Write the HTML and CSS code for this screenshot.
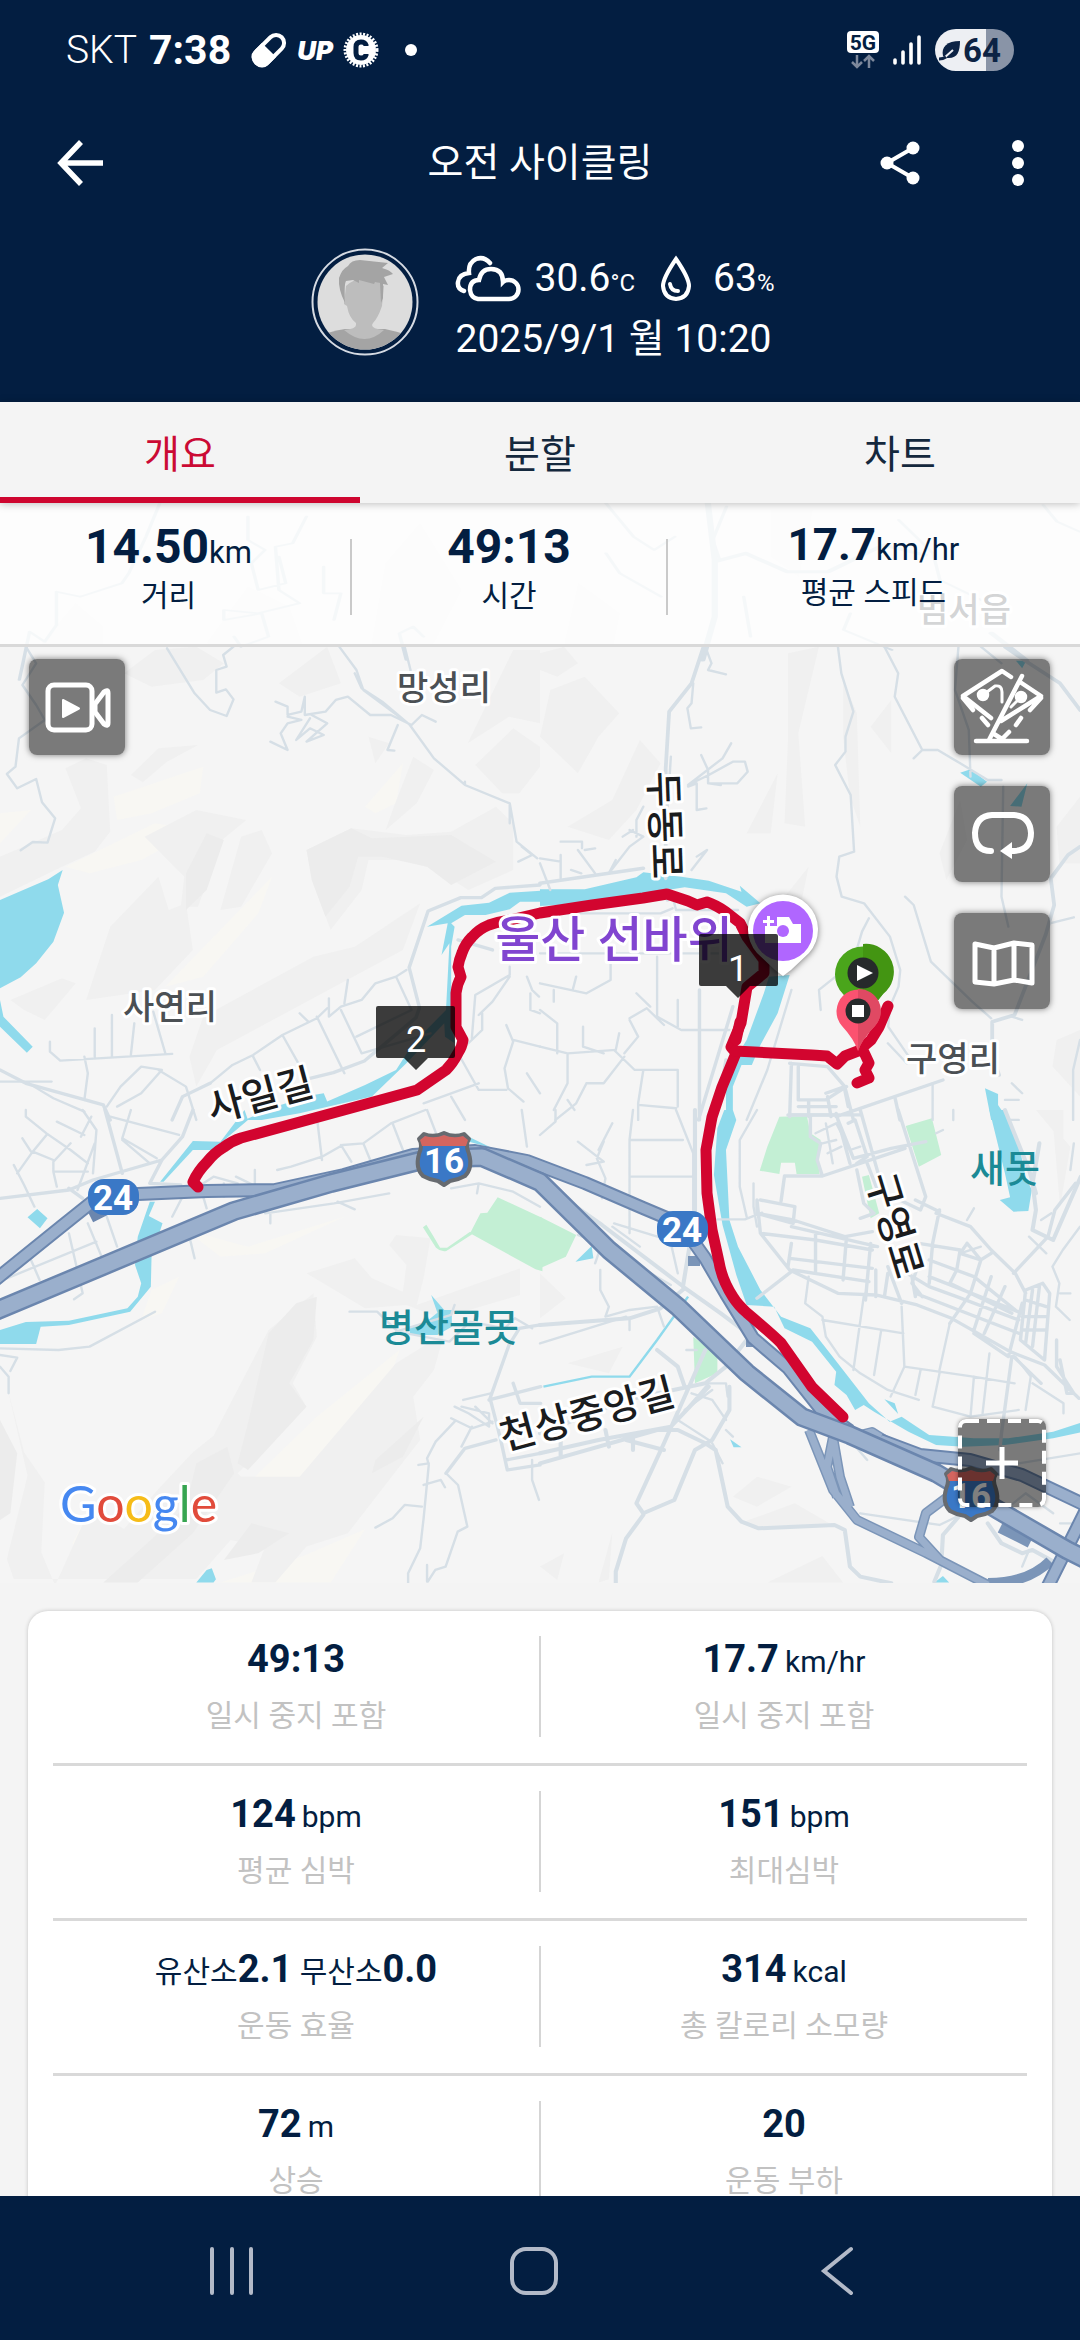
FILE: index.html
```html
<!DOCTYPE html>
<html lang="ko">
<head>
<meta charset="utf-8">
<meta name="viewport" content="width=device-width, initial-scale=1">
<title>오전 사이클링</title>
<link rel="stylesheet" href="styles.css">
</head>
<body>
<header class="header">
  <div class="status">
    <div class="status-left">
      <span class="carrier">SKT</span>
      <span class="clock">7:38</span>
      <svg class="status-icon pill" width="36" height="36" viewBox="0 0 36 36"><g transform="rotate(45 18 18)"><rect x="10" y="0" width="16" height="36" rx="8" fill="none" stroke="#fff" stroke-width="4"/><path d="M8 18h20v12a10 8 0 0 1-20 0z" fill="#fff"/></g></svg>
      <span class="up">UP</span>
      <svg class="status-icon" width="36" height="36" viewBox="0 0 36 36"><circle cx="18" cy="18" r="15" fill="#fff"/><circle cx="18" cy="18" r="16" fill="none" stroke="#fff" stroke-width="3" stroke-dasharray="2 1.5"/><path d="M23 14v-1q-1-3-5-3-5 0-5 5v6q0 5 5 5 4 0 5-3v-1" fill="none" stroke="#031e41" stroke-width="5"/></svg>
      <span class="more-dot"></span>
    </div>
    <div class="status-right">
      <svg width="32" height="38" viewBox="0 0 32 38"><rect width="32" height="22" rx="4" fill="#fff"/><text x="16" y="19" class="net">5G</text><path d="M10 24v12M5 31l5 5 5-5M22 37V25M17 30l5-5 5 5" fill="none" stroke="#7d889b" stroke-width="2.5"/></svg>
      <svg width="28" height="30" viewBox="0 0 28 30"><path d="M2 25v3M10 17v11M18 9v19M26 2v26" stroke="#fff" stroke-width="3.6" stroke-linecap="round"/></svg>
      <div class="battery"><svg width="22" height="22" viewBox="0 0 22 22"><path d="M4 17C2 8 8 2 21 2c0 11-3 18-13 17z" fill="#0c2344"/><path d="M0 20l5-1 9-8" fill="none" stroke="#edeff3" stroke-width="2"/><path d="M0 20q4 0 7-2" fill="none" stroke="#0c2344" stroke-width="3"/></svg><span>64</span></div>
    </div>
  </div>
  <div class="appbar">
    <button class="icon-btn back" aria-label="뒤로"><svg width="48" height="48" viewBox="0 0 48 48"><path d="M25 3L5 24l20 21M5 24h42" fill="none" stroke="#fff" stroke-width="5.5"/></svg></button>
    <h1>오전 사이클링</h1>
    <div class="actions">
      <button class="icon-btn" aria-label="공유"><svg width="48" height="48" viewBox="0 0 48 48"><path d="M37 9L11 24l26 15" fill="none" stroke="#fff" stroke-width="4"/><circle cx="37" cy="9" r="6.5" fill="#fff"/><circle cx="11" cy="24" r="6.5" fill="#fff"/><circle cx="37" cy="39" r="6.5" fill="#fff"/></svg></button>
      <button class="icon-btn" aria-label="더보기"><svg width="48" height="48" viewBox="0 0 48 48" fill="#fff"><circle cx="24" cy="7" r="6"/><circle cx="24" cy="24" r="6"/><circle cx="24" cy="41" r="6"/></svg></button>
    </div>
  </div>
  <div class="profile">
    <svg width="108" height="108" viewBox="0 0 108 108">
      <clipPath id="face"><circle cx="54" cy="54" r="47.500"/></clipPath>
      <circle cx="54" cy="54" r="52.500" fill="none" stroke="#d5dae2" stroke-width="2"/>
      <g clip-path="url(#face)"><path fill="#ddd" d="M0 0h108v108H0z"/>
      <path fill="#a4a4a4" d="M6 89q14-6 28-8h40q16 3 30 9v20H6z"/>
      <path fill="#bdbdbd" d="M35 38q18-16 38 0l-2 20q-4 12-9 17l-1 2q0 4 12 5-19 18-40 0 12-1 12-5v-2q-7-5-9-17l-3-2z"/>
      <path fill="#a4a4a4" d="M34 55q-7-14-6-25 3-9 9-12 3-6 12-6l28 3-6 5q8 2 11 6l-9 3 4 8-5-1 0 14-2 5-1-20-5-1-1 2-15-4v3l-6-3-7 1q-2 3-1 22z"/></g>
    </svg>
    <div class="profile-text">
      <div class="weather">
        <svg width="66" height="48" viewBox="0 0 66 48" fill="none" stroke="#fff" stroke-width="4.500" stroke-linecap="round"><path d="M23 44h31a9 9 0 0 0 0-19q-4 0-6 2 0-13-12-13-10 0-12 11-9 0-9 10 1 8 8 9zM35 8Q29 1 21 4q-8 4-7 14-10 1-11 9-1 7 6 9"/></svg>
        <span class="temp">30.6<small>°C</small></span>
        <svg class="drop" width="32" height="48" viewBox="0 0 32 48" fill="none" stroke="#fff" stroke-width="4"><path d="M16 4Q3 23 3 31q1 12 13 13 12-1 13-13Q29 23 16 4z"/><path d="M10 29q1 7 8 7" stroke-linecap="round"/></svg>
        <span>63<small>%</small></span>
      </div>
      <div class="date">2025/9/1 월 10:20</div>
    </div>
  </div>
</header>

<nav class="tabs" role="tablist">
  <button class="tab active" role="tab" aria-selected="true">개요</button>
  <button class="tab" role="tab" aria-selected="false">분할</button>
  <button class="tab" role="tab" aria-selected="false">차트</button>
</nav>

<main class="content">
  <section class="map">
    <svg class="map-canvas" viewBox="0 503 1080 1080" preserveAspectRatio="xMidYMid slice">
      <defs>
        <g id="shield"><path d="M-25-21l5-5q10 4 20-1 10 5 20 1l5 5q-4 6 0 15 4 14-4 22-7 4-15 5l-6 4-6-4q-8-1-15-5-8-8-4-22 4-9 0-15z" fill="#3a78c6" stroke="#676b70" stroke-width="4" stroke-linejoin="round"/><path d="M-24-20l5-4q10 3 19-1 9 4 19 1l5 4-2 6h-44z" fill="#d4655f"/></g>
      </defs>
      <rect y="503" width="1080" height="1080" fill="#f5f5f5"/>

      <!-- hill shading -->
      <g transform="translate(0 390) scale(.6886 .3333)" fill="#f0f0f0">
        <path d="M560 520l50-120 60 200-40 160h-90zM300 760l60-170 60 60 20 120zM60 760l50-120 40 70v60zM1120 360l60 0-20 200-40-60zM820 760l20-180 60 90-10 100z"/>
      </g>
      <g transform="translate(0 640) scale(.3444 .3333)">
        <g fill="#f8f7f3"><path d="M330 470l260-90-10 80-140 60-100 20zM190 680l260-130 120 20-160 90-150 40zM480 1040l310-330-40 110-160 190zM1060 500l110-130-20 120-60 30zM0 520l90-10-90 100z"/></g>
        <g fill="#f0f0f0"><path d="M190 385l60-30 60 20 10 200-45 60-95 45-180 90v-120l180-80 55-65zM380 405l80-80 115-10-90 50-70 62zM360 100l90-70 120-10 80 50-60 50-150 20zM810 130l140-110 40 110-120 40zM1490 30h78v220l-90-20-120 80zM1380 375l110-110 78 55v60l-60 80-50 0z"/><path d="M890 630l130-65 160 20 130-10 130-75 50 50v140l-130 60-90-60-100-30h-100l-20 90-90 120-50-140zM420 590l150-80 145 30-70 60-70 200-50 0 10-90zM1070 290l60 20-40 60zM1200 350l60 40-50 100-90 80 20-60zM320 860l140-150 30 100 50-20 20 140-110 120-200 30zM700 590l60-20 30 70-90 160-60 10zM30 1080l150-65 40 15-90 110-60-30zM590 1130l320-180 120-30 190-130-50 140-180 100-360 200-60 110-20-90z"/><path fill="#ececec" d="M890 630l130-65 60 30 230-10 130 80-130 70-70-55-130-30h-70l-25 90-70 90-40-110zM540 700l60-120 50 20-50 150-60 60z"/></g>
      </g>
      <g transform="translate(540 640) scale(.3444 .3333)">
        <g fill="#f0f0f0"><path d="M0 40l70-20 40 50-60 40-50-20zM30 150l100-40 100 110-60 70-60 110-110-110zM80 560l130-80 80-180 60 70-70 140-80 90zM720 40l90-20-60 260 20 280-60-10 10-250zM960 260l60-80 0 160zM600 580l90-180-20 180zM640 860l140-180-20 100-80 90zM880 120l40 100 10 340-30-90-20-180zM1160 640l60-160 20 120-60 120zM1500 560l68-90v200l-60 0zM1500 1200l68-30v200l-80-90z"/></g>
      </g>
      <g transform="translate(0 1110) scale(.3444 .3333)">
        <g fill="#f8f7f3"><path d="M740 1100l180-180 240-200-40 120-230 270zM640 1418l240-80 180-80-100 160zM540 360l180 50 280-90-230 110-130 10zM210 1300l50-100-20 140zM440 540l80-40-50 110-60 20z"/></g>
        <g fill="#f0f0f0"><path d="M890 490l140-45 50 60 90 40 10-80-50-60 20-30 100 10-20 120-20 80 300-110v80l-230 70-100-40-120 10zM780 660l130-110 10 130-70 140 40 70-200 200 10 10 170 0 280-340 140-90-30 110-60 80 20 130-210 280-120 40-90 107h-70l40-107-100-20-100 117H40l-20-60 60-250-60-270 50 200 60 90-10 210 40 100 100-230 100 60 100-120 100-110 60-50z"/><path fill="#ececec" d="M780 670l80-90 60-20-10 130-70 130 50 70-170 190-30-20 30-120zM570 1060l90-50 20 80-120 180-160 148H300l140-130 100-100zM0 930l50 100-20 180-30 20zM650 1350l80-110 110 30-90 60zM1090 1050l140-130-60 120-90 50z"/></g>
      </g>
      <g transform="translate(540 1110) scale(.3444 .3333)" fill="#f0f0f0">
        <path d="M0 490l75 75-75 60zM80 760l160-50-40 80zM580 1240l160-60 100 60-200 20zM560 1160l70-60 100 30-100 60zM0 1370l70-40-20 80zM170 1418l40-150-10 140zM660 1418l160-80 60 80zM1490 50l50 60-30 180zM1440 0h80v100z"/>
      </g>

      <!-- parks -->
      <g fill="#c3efd4">
        <path transform="translate(0 1110) scale(.3444 .3333)" d="M1365 370l30-60 20-2 30-46 130 62v160l-20-6zM1228 352l10-8 20 34 20 35 20 0 67-48 6 8-75 50q-15 4-30-10z"/>
        <path transform="translate(540 1110) scale(.3444 .3333)" d="M0 320l105 55-30 65-75 35zM695 20l80-2 10 52 30 20-10 50 7 52h-67l-5-34h-40l-5 34-57-10 22-72zM1062 48l76-23 27 110-65 35zM445 680l70 55v55l-65 30zM935 200l20-5 30 115-25 15z"/>
      </g>

      <!-- water -->
      <g fill="#8fdaec">
        <path transform="translate(0 640) scale(.3444 .3333)" d="M1570 752l-90 6-60 30-80 9-100 63 60-10-18 95 23-35-10 200-95 100-50 80-90 45-110 50-10-25-30 5-110 35-90 40h50l110-20 210-50 100-100 110-120 2 40 28 20-10-80V920l10-60-10-10 40-25h60l70-17 30-23 60 0zM0 780l140-62 42-28-14 45 18 83-31 87-50 65-45 42-60 33zM0 1080l10 50 85 90-17 18-78-78z"/>
        <path transform="translate(540 640) scale(.3444 .3333)" d="M0 748h130l150-36 20-15 110 13 80 12 95 33-5-18 60 53-40 10-60-40-120-18-50 8-220 40-150 8zM725 1005l-35 115-50 95-25 60h-30l-25 65v100h-20v-110l25-70 35-60 50-140 15-50zM1220 398l30-10 48 37-18 15zM1415 430l-17 70-33-2zM1292 1345l38 17v33l30 45h-50zM1382 62h30l-12 23z"/>
        <path transform="translate(0 1110) scale(.3444 .3333)" d="M710 0l10 30-80 70-20 20h-60l-85 95h-10l95-122 80 2zM435 275h15l-18 43 40 22-32 100-2 90-60 75-178 40-82 5-13 52H0v-42l75-24 125-4 170-37 30-35 10-40-18-55 8-85zM80 322l28-25 30 28-22 30zM570 1418l30-38 15-5 12 33-7 10zM1252 555l38 45h22v50l-42 25h-80v-22l50-20 30-25zM1310 80l30-10 90 45z"/>
        <path transform="translate(540 1110) scale(.3444 .3333)" d="M535 0h25l10 30-30 90 10 210 25 80 65 130 60 80 85 35 65 85 105 140 60 55 35-15 80 55 130 10 100 0 130-20 90-30v30l-90 20-140 20-120 5-80-5-80-40-100-60-30-20-25 15-25-45-35-30 5-40-70-90-80-40-30-65-80-5-30-90-40-150-25-150 10-140zM1305 0h45l40 100 20 100 18 40-10 63-43 2-40-35 30-8-15-72zM103 455l47-47 5 37zM1000 868l30 12 10 32zM552 988l33 24h-23zM1145 1418l25-20 18 20z"/>
        <path transform="translate(540 1110) scale(.3444 .3333)" d="M10 830l140-30 110 0 80-110 90-130" fill="none" stroke="#8fdaec" stroke-width="7"/>
      </g>

      <!-- local roads -->
      <g fill="none" stroke="#d6dfe6" stroke-width="7" stroke-linejoin="round" stroke-linecap="round">
        <g transform="translate(0 390) scale(.6886 .3333)" stroke-width="5">
          <path d="M232 340l-20 100-25 110-10 30-60 40-35-15v100l-17 50-22-30-15 145M360 380v70l25 30-20 40 10 80 40-20-10-80M445 380l-20 80-25 10 5 130 30 40-60 30-50-10M470 530v80l25 0-10 80M325 660l0 30 55-20 10 70-40 30-10-30M590 810l-10-80 20-20 15 30M880 340l40 100 30 40 30-40M880 490l20 60 60 70M1055 350l-20 100 10 60 40-20M1305 390l50 100 10 80 70 70M1235 670l-10 50 70 60M1080 620l10 120M1515 345l20 50 33 30"/>
          <path stroke-width="9" d="M1028 340l10 170 0 170-18 130M1038 515l45-25 60 55h60l80-80 60 30M1440 730l50 80"/>
        </g>
        <g transform="translate(0 640) scale(.3444 .3333)">
          <path d="M75 20l30 50-40 65 40 60 25 45-75 55-10 85-25 22 30 43 55-28 17 70 38 48-22 73-43-2-35 25M485 25l80 135 45 50 48 18 20-50-22-30-28 10V90l30-10-10-35 30-25M985 20l50 70 20 60 130 100M1175 20l17 70-10 100M1030 100l20 45 60 40 80 70M800 185l35 15v25l40-10 10-45v55l60-10 30-35 35-10 65 55 60 0 60 30 30-30 40 20M835 230l40 10-40 10-20 30 20 50-50-25M900 235l-40 65 40-35 40 20-50 20 60-55-45-25M1155 255l-30 75 20 2M1190 255l70 100 90 80 130 55 20 115 60 50M1350 425v10M1480 495v55M1505 665l40-20-30-25M0 1325h150M145 1205v30l30 27 325-20M75 1325l80 50 90 40M325 1125v125M275 1165v85M390 1150l-10 95M445 1115l35 125M245 1250l10 50-10 80M340 1400l70-40 60-70-60-10-60 60-40 60M460 1290l80 50 30 100M610 1330l65-55 60-30 85-60 100-50 30-30M735 1250l20 40M820 1185l60 110M870 1120l25 25M920 1130l80 170M955 1075l0 55 35-30 60-20 40-50 60-20 30-20M1010 1020l-10 70M990 1110l60 130 200-60M1035 1190l160-80-45-100M1480 980v25l-100 60-10 130M1480 1010l-50 75-40 40M1530 1010l15 40 20 20M1540 1060v50l28 10M1400 1120v50l-40 40M1470 1155l20 50-25 80 10 60 45 40M1490 1200l78 20M1330 1240l60 110 80 0M1230 1390l160-60M1310 1370l40 70M1530 1300l38 60"/>
          <path stroke-width="10" d="M1568 735l-130 10-40 28h-60l-95 40-55 170 30 120-10 30-150 130-90 35-80 20M0 1290l75 40 225 65 20 45M500 1440l30-70 80-40"/>
          <path stroke-width="10" d="M1330 900l100 30"/>
        </g>
        <g transform="translate(540 640) scale(.3444 .3333)">
          <path d="M480 20l18 50-10 20 52 13M445 130l-5 60-12 15 10 60 30-3M865 20l10 80 35 115-23 75v45l-30 40 45 90 10 170-43 15-8 60 15 60 65 20 75 100 30 100-5 50-25 60-5 60 60 90M955 835l-20 40-20 70M1000 20l40 80-10 70 80 160-25 25M1110 330l45 0 65 40 80 50 40 0M1215 20l-10 130 40 120 5 140M1280 20l60 50M1345 440l-5 330 20 90M1060 770l25 25 50 170 120 120 55 50M1480 850l70-18M555 310l-25 45-100 80 60-30 70-40 35 0 8 30-30 35-85 0 0-40-20-45M430 440l25-10 0 80 28-5M490 430l35 5M380 350l-10 160M60 605h62v20M110 630l50 70M160 625l-30 5M0 670l30 80M0 655l60 10v50M60 645v60M90 690l30 10M200 700l60-80 40-30-40-20M220 660l-20 40M300 500l-20 40 0 50M240 590l30-20M440 690l45-60-30 20M0 820h350l35-15M385 770l10 40h180M0 940h520M340 950v180l70 40h140M205 960v60l-70 40-135-30M105 1010l-10 40M40 1050v35M280 1060l40 40M400 1080v80M0 1110l50 40v90M125 1160v60l60 20M215 1230l60 60 30-0h95v110M260 1140l25 50-40 50M260 1135l50-30 50 50M0 1220l80 20 140-10 10-50M80 1240v90l-40 80M300 1290l-15 100 0 50M285 1395l110 10M135 1330l50 0 60-80M135 1330l-30 60-60 50M80 1380l20 30M730 1050l-70 240-60 150M815 1110l-5-60 60-50M1010 1210l55 60M1140 1330v110M1370 1330l30 30M1350 1380h40M1360 1440h30M1370 1130l30 10M1568 1200l-20 90v150"/>
          <path stroke-width="11" d="M475 20l-35 110-65 85-10 170 0 330M370 750v30M1350 20l70 50 90 60 58 80M1568 620l-35 25-50 70 10 80-25 90-90 240-65 20 0 100 20 60M0 730l300-45"/>
          <path stroke-width="10" d="M725 1270l110 10 50 60 25 100M730 1270l-5 160M750 1280v100h80l60-40M750 1400h110M730 1425h200M835 1370l10 60M780 1380v50M830 1360l55-20M860 1430l310-110M885 1350l10 50M1030 1370l15 70M560 1100l-100 340M540 1260l-30 180M463 1050v390"/>
        </g>
        <g transform="translate(0 1110) scale(.3444 .3333)">
          <path d="M75 0v20l60 50 70 50 50 40M135 75l-40 50 60 25M95 125l-45 65M165 35l80 40M205 100l-50 55 0 30h100M240 0l40 60-10 130M265 20l-30 60M320 20l200 55M380 0l-25 85 100 60M355 90l80 70M275 100l-50 140M40 165l30 60 30 65M65 85l25 40M155 185l10 45M20 505l260-110M90 450l25 60M200 370l40 180-25 18M255 340l40 100M310 320l30 90M550 380l15 65M0 715l170 5 90-10 190-105M0 735l50 8-20 40M500 320l30-60 90-60 70 20M590 260l10 35M650 220l0 40M685 200l100 50M740 180v60M770 310l200-30 160-30M785 310v30M980 275l50 23M805 180l40-10 90-30 60-35 60-5 80-60 100-40M920 20l15 130M990 105l30 50M1055 100l20 50M1140 40l30 80M1240 0l30 80M1515 0l15 110M0 770l25 30 0 50M1310 235l80-15 100 25 78 45M1390 220l-5 30M1015 605h80l60 60 150 30 60-60 100 20 30-30 50 30M1150 665l160-50 10-30M1320 890l40 20 60 40 0-40-80-20M1310 925l60 30 60-20M1345 870l80-20M1380 890l50 50M1370 950l-30 60M1320 935l-55 60-25 50 5 20-15 160-10 90-35 75v70M1215 1065l30-5M1230 1125l50-15 12 22M1225 1190l-50-5-35 40-50 28M1295 1090l35 35 27 125-28 15-35 105-30 10-22 35M1240 1365l0 50M1545 1050v60l20 60"/>
          <path stroke-width="10" d="M305 0l50 190M560 0l-30 80-60 70-200 60-70 30-200 25M470 150l-35 70 90 5M200 235l40 30M1568 645l-60 10-30 50-55 160 30 120 20 95 95-15M1420 870l150-40M1490 820l20 60 60 0M1440 990l-90 25-55 75M1470 1050l98-20"/>
        </g>
        <g transform="translate(540 1110) scale(.3444 .3333)">
          <path d="M270 0l-10 90v280M260 90h155M265 200h180M395 0l50 130v170M110 95l75 60-50 10M185 95l-20 50 25 60-10 60M210 350l80 60M215 340l190 60M0 75l45-40V0M110 375l70 30 200 120M180 400l-20 60M175 480l0 60 25 50-10 30 70-20 80-10M260 630v30M0 700l250-80M340 590l20 60M630 0l-50 90v140l20 90M515 328h80l50-20M830 40l20 120M800 70l60-30M820 100l40-10M835 130l40-20M860 40l40 80 30-10M780 500l-10 80 50 40 10 60 40 60 60 50 80 50 90 30M820 630l235 40M940 560l-30 220M990 665l-20 130M1050 590l8 180-40 90M1058 770l200 30 120 20M1105 780l-15 75M1160 790l-20 100M1190 640l-30 140M1260 800l-10 120M1305 730l-20 180M1140 890l110 30 140-20M1380 740l45 60-15 100M1430 820l90 60 0 30M1420 380l50 50M1455 330l30-20M1240 330l20-35M1220 430l60-20M1550 100l-10 80M1568 350l-50 70-30 50 20 50-10 70 40 40M1510 550l30 0M480 820l60 0 5 40M440 850l60 20 40 60M420 900l80-60M400 930l30 20 60 40M490 820l-100 120M540 960l20 20M500 1000l30 60M900 990l50 60M930 1210l230 35 60-30M1390 1060l180-30M1150 70l20-10M1200 0v30M1350 1200l60-50 80 60M1510 1240l58 0M1400 1370l20-50M620 220v70l10 60M425 720l30 0M380 400l20 90M170 120l40-80"/>
          <path stroke-width="10" d="M720 15h140l50 130 110-30 100-20M785 20l0 60 30 20-10 50 15 48 240-83M860 10l40 150M895 40l20-10 35 110-30 20M930 0l60 220M1040 0l80 260-15 40-60-30M820 198h-110l-10 75M640 270l100 20-5 50-105-30 0-40 10 100 85 110 140 70 110 5 120 30 100 40 170 100 100 40 100 100M630 310l105 20 150 50 80-15M640 370l160 20 165 30M730 400l-10 70M725 445l240 30M800 370v120M735 480l220 35M890 380l-10 130M960 400l-15 170M730 485l-100 80M730 350l250 60M975 480v80M1010 490l-10 70M1010 470l40 110M1050 480l80 50 80 30 180 70M1100 460l-20 60 30 40M1100 400l120 20-10 60-20 40 180 90M1160 300l-20 100-10 120M1150 310l100 40 60 70 70 70 30 60M1240 400l40 50-30 100-60 90M1240 400l-20 30 60 20 30-20M1310 500l-50 160M1350 530l-60 140M1400 580l-40 160-100-70M1090 270l70 35M1090 550l300 120M1130 500l270 110M1130 450l130 50 120 100M1410 540l50-20 20 30-15 200-70-60zM1430 540l-20 160M1450 530l-20 180M1375 490l100-110 20-80 60-80M1370 740l-30 230-5 50M1500 690v80l50 80-20 0-20-100M1375 740l80 80M920 180l20 100 30 30-40 15M950 160l30 80M1080 500l10 60M1410 570l60 20M1400 620h70M1400 660h65"/>
          <path stroke-width="12" d="M450 0v310l-35 220 110 80 90 70M0 215l180 130 230 180M0 645l260-20 90-30 70-60M600 690l-60 80-60 50-230 50-250 100M340 720l60 50 20 60M490 830l-110 120-210 40-170 40M0 1060l340-100 60 0 80 40 30 20 35 170 40 45 50 20 220-10 30 15 15 110 30 30 90 20M550 830v70l-50 90-50 30-60 150-90 40-20-30 80-180 120-280M250 990l110 30M190 960l10 50M270 980v40M60 980v60M300 1215l-50 70-30 100 0 35M1220 1215l-50 60-5 90-20 50M1300 1240l40 60 60 30 30-10 70 40M1450 100l-20 120 10 80-10 60 60 30 80-190M1350 0l70 180 20 70"/>
        </g>
      </g>

      <!-- highways -->
      <g fill="none" stroke-linejoin="round">
        <path stroke="#7b95b8" stroke-width="10" d="M809 1430l24 60 24 30 69 33 62 32M833 1437l7 40 10 30M833 1437l-6 30 10 30M946 1498l-20 15-7 24 21 23M852 1437l20-5 16 10 12 16M988 1583q40 0 62-22M1000 1528l30 15M688 1261h12M746 1342h12"/>
        <path stroke="#9aafcc" stroke-width="7" d="M809 1430l24 60 24 30 69 33 62 32M833 1437l7 40 10 30M833 1437l-6 30 10 30M946 1498l-20 15-7 24 21 23M852 1437l20-5 16 10 12 16"/>
        <path stroke="#6b86ae" stroke-width="14" d="M-5 1280l67-54 35-28 41-4 69-3 68-1 69-15 69-20 62-4 52 10 58 22 58 25 38 16 24 34 21 36 27 44 35 30 34 43 28 20M880 1440l40 15 50 5 52 15 63 30M90 1216l20-10M1046 1590l40-80"/>
        <path stroke="#9aafcc" stroke-width="10" d="M-5 1280l67-54 35-28 41-4 69-3 68-1 69-15 69-20 62-4 52 10 58 22 58 25 38 16 24 34 21 36 27 44 35 30 34 43 28 20M880 1440l40 15 50 5 52 15 63 30M1046 1590l40-80"/>
        <path stroke="#6b86ae" stroke-width="20" d="M-7 1312l110-46 131-55 97-28 96-24 55-2 58 25 69 68 69 57 69 66 55 44 48 18 86 38 62 37 69 40 40 20"/>
        <path stroke="#9aafcc" stroke-width="15" d="M-7 1312l110-46 131-55 97-28 96-24 55-2 58 25 69 68 69 57 69 66 55 44 48 18 86 38 62 37 69 40 40 20"/>
      </g>

      <!-- ride -->
      <g fill="none" stroke="#d2052f" stroke-width="11" stroke-linecap="round" stroke-linejoin="round">
        <path d="M843 1417L812 1387 781 1343Q772 1334 747 1313 738 1305 733 1297 722 1280 719 1262L712 1230 707 1193 706 1150 712 1117 722 1087 736 1053 731 1047 741 1023 747 987 764 973v-13l-17-23-7-14-14-11q-10-7-19-10l-10 3-9-4-21-7-24 4-51 7-52 8-30 7q-12 2-21 5-10 4-17 12-7 7-10 16-3 7-4 14l3 10q-4 7-5 16v34l7 13q-1 7-5 13-5 10-12 17l-29 20-73 20-103 28q-9 3-17 9-10 6-17 15-9 9-14 20l5 5"/>
        <path d="M888 1006l-9 21-8 13-13 11-13 5-8 8-10-8-15-1-77-4M862 1048l7 15-4 7 4 8-12 5M736 1040l4-18"/>
      </g>

      <!-- place names -->
      <g class="place"><text x="444" y="700">망성리</text><text x="170" y="1019">사연리</text><text x="953" y="1071">구영리</text><text x="964" y="622">범서읍</text></g>
      <g class="street">
        <text transform="translate(665 825) rotate(88)" y="14">두동로</text>
        <text transform="translate(260 1095) rotate(-15)" y="14">사일길</text>
        <text transform="translate(895 1225) rotate(73)" y="14">구영로</text>
        <text transform="translate(587 1414) rotate(-15)" y="14">천상중앙길</text>
      </g>
      <g class="pond"><text x="449" y="1341">병산골못</text><text x="1005" y="1182">새못</text></g>
      <text class="sight" x="614" y="957">울산 선바위</text>

      <g fill="#3a78c6"><rect x="88" y="1179" width="51" height="36" rx="16"/><rect x="657" y="1211" width="51" height="36" rx="16"/></g>
      <use href="#shield" x="444" y="1160"/><use href="#shield" x="971" y="1495"/>
      <g class="route"><text x="113" y="1210">24</text><text x="682" y="1242">24</text><text x="444" y="1173">16</text><text x="971" y="1508">16</text></g>

      <!-- pins -->
      <g class="pin">
        <path d="M783 976l-8-6-18-17a35 35 0 1 1 52 0l-18 17z" fill="#fff"/>
        <circle cx="783" cy="931" r="30" fill="#b066ff"/>
        <path d="M765 926h12v-9h12l4 7h8v19h-36zM767 916h3v4h4v3h-4v4h-3v-4h-4v-3h4z" fill="#fff"/><circle cx="783" cy="931" r="6" fill="#b066ff"/>
      </g>
      <g fill="#000" fill-opacity=".76"><path d="M701 934h75a2 2 0 0 1 2 2v48a2 2 0 0 1-2 2h-26l-12 12-12-12h-25a2 2 0 0 1-2-2v-48a2 2 0 0 1 2-2zM378 1006h75a2 2 0 0 1 2 2v48a2 2 0 0 1-2 2h-25l-12 12-12-12h-26a2 2 0 0 1-2-2v-48a2 2 0 0 1 2-2z"/></g>
      <g class="lap"><text x="738" y="981">1</text><text x="416" y="1052">2</text></g>
      <path d="M863 1022q-8-14-20-28a28 28 0 1 1 40 0q-12 14-20 28z" fill="#4aa51b"/><path d="M863 944a28 28 0 0 1 20 50q-12 14-20 28z" fill="#439512"/>
      <circle cx="863" cy="973" r="15.500" fill="#262a2b"/><path d="M857 965l16 8-16 8z" fill="#fff"/>
      <path d="M858 1051q-4-12-16-25a22 22 0 1 1 33 0q-13 13-17 25z" fill="#fb5270"/><path d="M858 989a22 22 0 0 1 17 37q-13 13-17 25z" fill="#e04963"/>
      <circle cx="858" cy="1011" r="12.500" fill="#262a2b"/><path d="M852 1005h12v12h-12z" fill="#fff"/>

      <text class="google" x="60" y="1522"><tspan fill="#4688f1">G</tspan><tspan fill="#e14b3b">o</tspan><tspan fill="#f6bc18">o</tspan><tspan fill="#4688f1">g</tspan><tspan fill="#37a551">l</tspan><tspan fill="#e14b3b">e</tspan></text>
    </svg>

    <div class="summary">
      <div class="sum-cell first"><p class="sum-value"><b>14.50</b>km</p><p class="sum-label">거리</p></div>
      <div class="sum-cell"><p class="sum-value"><b>49:13</b></p><p class="sum-label">시간</p></div>
      <div class="sum-cell small"><p class="sum-value"><b>17.7</b>km/hr</p><p class="sum-label">평균 스피드</p></div>
    </div>

    <button class="map-btn video" aria-label="동영상"><svg width="96" height="96" viewBox="0 0 96 96" fill="none" stroke="#fff" stroke-width="5" stroke-linejoin="round"><rect x="19" y="26" width="44" height="45" rx="6"/><path d="M66 45l9-12q4-3 4 1v30q0 4-4 1l-9-12z"/><path d="M34 41v17l16-8.500z" fill="#fff" stroke-width="2"/></svg></button>
    <div class="map-tools">
      <button class="map-btn" aria-label="3D 지도 끄기"><svg width="96" height="96" viewBox="0 0 96 96" fill="none" stroke="#fff" stroke-width="4.500" stroke-linecap="round" stroke-linejoin="round"><path d="M57 18l-9-6L9 37l28 22M66 23l21 14-40 25M9 39l10 12M87 39l-11 12M22 82h51M68 17L35 81M28 59l6 7M67 59l-5 7M40 75l8 5 7-7"/><circle cx="29" cy="36" r="4" fill="#fff"/><circle cx="67" cy="38" r="4" fill="#fff"/><path d="M29 36l12-9q7-1 7 6v10M67 38l-10 10" stroke-width="3"/></svg></button>
      <button class="map-btn" aria-label="다시 보기"><svg width="96" height="96" viewBox="0 0 96 96"><path d="M37 65q-16 0-16-18 1-17 17-18h22q16 1 17 18 0 17-17 18h-6" fill="none" stroke="#fff" stroke-width="6" stroke-linecap="round"/><path d="M46 65l12-9v17z" fill="#fff"/></svg></button>
      <button class="map-btn" aria-label="지도 유형"><svg width="96" height="96" viewBox="0 0 96 96" fill="none" stroke="#fff" stroke-width="5" stroke-linejoin="round"><path d="M21 31l19 4 20-5 18 2v38l-18-3-20 4-19-2zM40 35v35M60 30v37"/></svg></button>
    </div>
    <button class="map-add" aria-label="추가"><svg width="88" height="88" viewBox="0 0 88 88" fill="none" stroke="#fff"><rect x="2" y="2" width="84" height="84" rx="6" stroke-width="4" stroke-dasharray="13 8"/><path d="M28 44h32M44 28v32" stroke-width="5"/></svg></button>
  </section>

  <section class="card">
    <div class="row"><div class="cell"><p class="value"><b>49:13</b></p><p class="label">일시 중지 포함</p></div><div class="cell"><p class="value"><b>17.7</b><span class="unit">km/hr</span></p><p class="label">일시 중지 포함</p></div></div>
    <div class="row"><div class="cell"><p class="value"><b>124</b><span class="unit">bpm</span></p><p class="label">평균 심박</p></div><div class="cell"><p class="value"><b>151</b><span class="unit">bpm</span></p><p class="label">최대심박</p></div></div>
    <div class="row"><div class="cell"><p class="value">유산소<b>2.1</b> 무산소<b>0.0</b></p><p class="label">운동 효율</p></div><div class="cell"><p class="value"><b>314</b><span class="unit">kcal</span></p><p class="label">총 칼로리 소모량</p></div></div>
    <div class="row"><div class="cell"><p class="value"><b>72</b><span class="unit">m</span></p><p class="label">상승</p></div><div class="cell"><p class="value"><b>20</b></p><p class="label">운동 부하</p></div></div>
  </section>
</main>

<footer class="navbar">
  <button class="nav-btn" aria-label="최근 앱"><svg width="54" height="54" viewBox="0 0 54 54"><path d="M7 5v44M27 5v44M46 5v44" stroke="#b3bac8" stroke-width="4" stroke-linecap="round"/></svg></button>
  <button class="nav-btn" aria-label="홈"><svg width="54" height="54" viewBox="0 0 54 54"><rect x="5" y="5" width="44" height="44" rx="14" fill="none" stroke="#b3bac8" stroke-width="4"/></svg></button>
  <button class="nav-btn" aria-label="뒤로 가기"><svg width="54" height="54" viewBox="0 0 54 54"><path d="M41 5L14 27l27 22" fill="none" stroke="#b3bac8" stroke-width="4" stroke-linecap="round"/></svg></button>
</footer>
</body>
</html>
```

FILE: styles.css
```css
* { box-sizing: border-box; }

body {
  margin: 0;
  height: 100vh;
  display: flex;
  flex-direction: column;
  background: #f4f4f4;
  color: #031e41;
  font-family: Roboto, "Noto Sans CJK KR", sans-serif;
}

p, h1 { margin: 0; }
svg { display: block; }
button {
  margin: 0;
  padding: 0;
  border: 0;
  background: none;
  color: inherit;
  font: inherit;
}

/* header */
.header {
  flex: none;
  background: #031e41;
  color: #fff;
  font-size: 39px;
}
.status {
  height: 100px;
  padding: 0 66px;
  display: flex;
  justify-content: space-between;
  align-items: center;
}
.status-left, .status-right { display: flex; align-items: center; }
.carrier { font-weight: 300; margin-right: 12px; }
.clock { font-size: 41px; font-weight: 700; margin-right: 20px; }
.up {
  margin: 0 10px;
  font-family: Inter, sans-serif;
  font-size: 26px;
  font-style: italic;
  font-weight: 900;
}
.more-dot {
  width: 12px;
  height: 12px;
  margin-left: 26px;
  border-radius: 50%;
  background: #fff;
}
.status-right { gap: 14px; }
.net {
  font: 700 21px Roboto, sans-serif;
  fill: #031e41;
  text-anchor: middle;
}
.battery {
  height: 42px;
  width: 79px;
  padding-left: 4px;
  display: flex;
  align-items: center;
  gap: 2px;
  border-radius: 21px;
  background: linear-gradient(90deg, #edeff3 64%, #8994a7 64%);
  color: #0c2344;
  font-size: 33px;
  font-weight: 700;
}
.appbar {
  height: 126px;
  padding: 0 26px;
  display: grid;
  grid-template-columns: 1fr auto 1fr;
  align-items: center;
}
.appbar h1 { font-size: 39px; font-weight: 400; line-height: 60px; }
.icon-btn {
  width: 72px;
  height: 72px;
  display: flex;
  align-items: center;
  justify-content: center;
}
.back { margin-left: 18px; }
.actions { display: flex; justify-content: flex-end; gap: 46px; }
.profile {
  padding: 22px 0 32px 6px;
  display: flex;
  justify-content: center;
  gap: 36px;
}
.profile-text { line-height: 61px; }
.weather { height: 61px; display: flex; align-items: center; gap: 13px; }
.weather small { font-size: 24px; line-height: 24px; }
.drop { margin: 0 8px 0 12px; }

/* tabs */
.tabs {
  flex: none;
  position: relative;
  z-index: 2;
  height: 101px;
  display: flex;
  background: #f4f4f4;
  box-shadow: 0 1px 8px rgba(0, 0, 0, .25);
}
.tab {
  flex: 1;
  padding-top: 2px;
  border-bottom: 6px solid transparent;
  font-size: 39px;
  color: #14283d;
}
.tab.active { color: #cb0a34; border-bottom-color: #ce052f; }

/* map */
.content { flex: 1; min-height: 0; overflow: hidden; }
.map { position: relative; aspect-ratio: 1; overflow: hidden; }
.map-canvas { width: 100%; height: 100%; }
.map-canvas text { font-family: Roboto, "Noto Sans CJK KR", sans-serif; text-anchor: middle; }
.place, .street, .sight, .google {
  paint-order: stroke;
  stroke: #fff;
  stroke-width: 6px;
  stroke-linejoin: round;
}
.place { font-size: 34px; font-weight: 500; fill: #4b5054; }
.street { font-size: 39px; font-weight: 500; fill: #1a1c1e; }
.pond { font-size: 38px; font-weight: 500; fill: #1b8a96; }
.sight { font-size: 49px; font-weight: 500; fill: #8145d0; }
.route { font-size: 35px; font-weight: 700; fill: #fff; }
.lap { font-size: 36px; fill: #fff; }
.map-canvas .google { font-family: Lato, sans-serif; font-size: 50px; text-anchor: start; }
.pin { filter: drop-shadow(0 1px 3px rgba(0, 0, 0, .5)); }

.summary {
  position: absolute;
  inset: 0 0 auto;
  height: 144px;
  padding-top: 20px;
  display: grid;
  grid-template-columns: 351fr 316fr 413fr;
  border-bottom: 3px solid #d9d9d9;
  background: rgba(255, 255, 255, .76);
  text-align: center;
}
.sum-cell { position: relative; font-size: 31px; }
.sum-cell.first { padding-right: 14px; }
.sum-cell + .sum-cell::before {
  content: "";
  position: absolute;
  left: -1px;
  top: 16px;
  height: 76px;
  border-left: 2px solid #cacaca;
}
.sum-value { height: 48px; line-height: 48px; }
.sum-value b { font-size: 48px; }
.sum-label { margin-top: 5px; font-size: 30px; line-height: 40px; }
.small .sum-value { height: 45px; line-height: 45px; }
.small b { font-size: 44px; }

.map-btn {
  width: 96px;
  height: 96px;
  border-radius: 8px;
  background: rgba(0, 0, 0, .5);
  box-shadow: 0 0 6px rgba(0, 0, 0, .5);
}
.video { position: absolute; left: 29px; top: 156px; }
.map-tools {
  position: absolute;
  right: 30px;
  top: 156px;
  display: grid;
  gap: 31px;
}
.map-add {
  position: absolute;
  right: 34px;
  bottom: 76px;
  border-radius: 8px;
  background: rgba(0, 0, 0, .5);
  box-shadow: 0 0 4px rgba(0, 0, 0, .4);
}

/* statistics */
.card {
  margin: 28px 28px 0;
  padding: 0 25px;
  border-radius: 20px;
  background: #fff;
  box-shadow: 0 0 4px rgba(0, 0, 0, .2);
}
.row { display: flex; padding: 25px 0 26px; border-bottom: 3px solid #d9d9d9; }
.cell { flex: 1; height: 101px; text-align: center; }
.cell + .cell { border-left: 2px solid #d5d5d5; }
.value { height: 46px; font-size: 30px; line-height: 46px; }
.value b { font-size: 38px; }
.unit { margin-left: 6px; }
.label { margin-top: 14px; font-size: 30px; line-height: 40px; color: #c2c2c2; }

/* system navigation */
.navbar {
  flex: none;
  height: 144px;
  padding: 6px 92px 0 81px;
  display: flex;
  background: #031e41;
}
.nav-btn { flex: 1; display: flex; align-items: center; justify-content: center; }
```
